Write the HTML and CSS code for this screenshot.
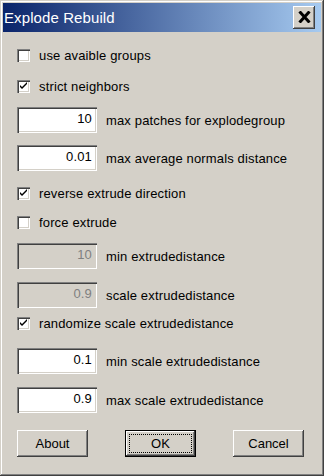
FILE: index.html
```html
<!DOCTYPE html>
<html lang="en">
<head>
  <meta charset="UTF-8">
  <title>Explode Rebuild</title>
  <link rel="stylesheet" href="styles.css">
</head>
<body>
  <div class="window">
    <div class="titlebar">
      <span class="title">Explode Rebuild</span>
      <button class="close">
        <svg width="13" height="12" viewBox="0 0 13 12"><path d="M1.5 0.5 L11.5 11.5 M11.5 0.5 L1.5 11.5" stroke="#000" stroke-width="3"/></svg>
      </button>
    </div>
    <div class="content">
      <label class="row check r1"><span class="box"></span>use avaible groups</label>
      <label class="row check r2"><span class="box on"></span>strict neighbors</label>
      <div class="row field r3"><span class="edit">10</span>max patches for explodegroup</div>
      <div class="row field r4"><span class="edit">0.01</span>max average normals distance</div>
      <label class="row check r5"><span class="box on"></span>reverse extrude direction</label>
      <label class="row check r6"><span class="box"></span>force extrude</label>
      <div class="row field r7"><span class="edit off">10</span>min extrudedistance</div>
      <div class="row field r8"><span class="edit off">0.9</span>scale extrudedistance</div>
      <label class="row check r9"><span class="box on"></span>randomize scale extrudedistance</label>
      <div class="row field r10"><span class="edit">0.1</span>min scale extrudedistance</div>
      <div class="row field r11"><span class="edit">0.9</span>max scale extrudedistance</div>
      <div class="buttons">
        <button class="btn">About</button>
        <button class="btn default"><span class="focus">OK</span></button>
        <button class="btn">Cancel</button>
      </div>
    </div>
  </div>
</body>
</html>
```

FILE: styles.css
```css
* {
  margin: 0;
  padding: 0;
  box-sizing: border-box;
}
body {
  background: #d4d0c8;
  font-family: "Liberation Sans", Arial, sans-serif;
  font-size: 13px;
  color: #000;
}
.window {
  width: 324px;
  height: 476px;
  padding: 3px;
  background: #d4d0c8;
  box-shadow: inset -1px -1px #404040, inset 1px 1px #d4d0c8,
              inset -2px -2px #808080, inset 2px 2px #fff;
  display: flex;
  flex-direction: column;
}
.titlebar {
  height: 29px;
  display: flex;
  align-items: center;
  justify-content: space-between;
  padding: 0 6px 0 1px;
  background: linear-gradient(to right, #0a246a, #a6caf0);
}
.title {
  color: #fff;
  font-size: 15px;
  letter-spacing: 0.1px;
}
.close {
  width: 22px;
  height: 23px;
  border: none;
  background: #d4d0c8;
  box-shadow: inset -1px -1px #404040, inset 1px 1px #fff,
              inset -2px -2px #808080, inset 2px 2px #d4d0c8;
  display: flex;
  align-items: center;
  justify-content: center;
  padding-bottom: 1px;
}
.content {
  padding: 0 0 0 14px;
  display: flex;
  flex-direction: column;
  letter-spacing: 0.15px;
}
.row {
  display: flex;
  align-items: center;
}
.check { height: 13px; }
.field { height: 26px; }
.box {
  width: 13px;
  height: 13px;
  margin-right: 9px;
  background: #fff;
  box-shadow: inset 1px 1px #808080, inset 2px 2px #404040,
              inset -1px -1px #fff, inset -2px -2px #d4d0c8;
  flex: none;
}
.box.on {
  background: #fff url("data:image/svg+xml;utf8,<svg xmlns='http://www.w3.org/2000/svg' width='13' height='13'><path d='M3 5 L3 7 L5 9 L10 4 L10 2 L5 7 Z' fill='black'/></svg>") no-repeat;
}
.edit {
  width: 80px;
  height: 26px;
  margin-right: 9px;
  padding-right: 5px;
  padding-top: 1px;
  text-align: right;
  line-height: 22px;
  background: #fff;
  box-shadow: inset 1px 1px #808080, inset 2px 2px #404040,
              inset -1px -1px #fff, inset -2px -2px #d4d0c8;
  flex: none;
}
.edit.off {
  background: #d4d0c8;
  color: #808080;
}
.r1 { margin-top: 17px; }
.r2 { margin-top: 18px; }
.r3 { margin-top: 14px; }
.r4 { margin-top: 12px; }
.r5 { margin-top: 16px; }
.r6 { margin-top: 16px; }
.r7 { margin-top: 14px; }
.r8 { margin-top: 13px; }
.r9 { margin-top: 9px; }
.r10 { margin-top: 18px; }
.r11 { margin-top: 13px; }
.buttons {
  margin-top: 17px;
  width: 287px;
  display: flex;
  justify-content: space-between;
}
.btn {
  width: 71px;
  height: 27px;
  border: none;
  background: #d4d0c8;
  font-family: "Liberation Sans", Arial, sans-serif;
  font-size: 13px;
  color: #000;
  box-shadow: inset -1px -1px #404040, inset 1px 1px #fff,
              inset -2px -2px #808080, inset 2px 2px #d4d0c8;
}
.btn.default {
  border: 1px solid #000;
  padding: 3px;
  display: flex;
}
.focus {
  flex: 1;
  border: 1px dotted #000;
  display: flex;
  align-items: center;
  justify-content: center;
}
```
